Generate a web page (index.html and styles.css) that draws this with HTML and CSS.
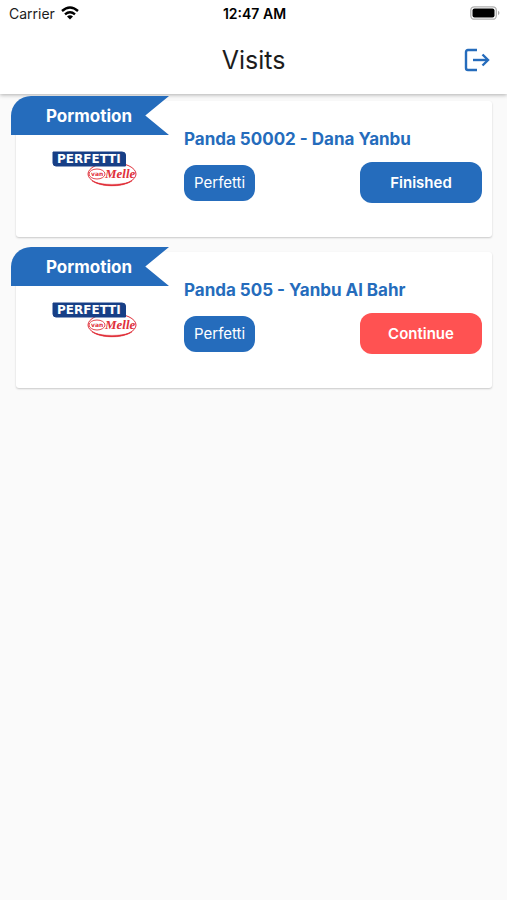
FILE: index.html
```html
<!DOCTYPE html>
<html lang="en">
<head>
  <meta charset="UTF-8">
  <meta name="viewport" content="width=device-width, initial-scale=1.0">
  <title>Visits</title>
  <link rel="stylesheet" href="styles.css">
</head>
<body>

<!-- Shared brand logo -->
<svg class="symbols" aria-hidden="true">
  <symbol id="perfetti" viewBox="0 0 86 37">
    <ellipse cx="60" cy="23" rx="24" ry="11.500" fill="#fff" stroke="#e0303a" stroke-width="1"/>
    <path d="M40 30 C48 36 70 37 80 30 C70 34.500 50 34.500 40 30Z" fill="#e0303a" stroke="#e0303a" stroke-width=".4"/>
    <path d="M1 1 H70 Q73.500 1 73.500 4 V15 H4 Q1 15 1 12Z" fill="#173f86" stroke="#173f86" stroke-linejoin="round"/>
    <ellipse cx="45" cy="23" rx="8" ry="5" fill="#fff" stroke="#e0303a" stroke-width=".9"/>
    <text class="logo-name" x="5" y="12">PERFETTI</text>
    <text class="logo-van" x="39" y="25">van</text>
    <text class="logo-melle" x="53" y="27">Melle</text>
  </symbol>
</svg>

<header class="header">
  <div class="status-bar">
    <div class="carrier">
      <span>Carrier</span>
      <svg width="18" height="14" viewBox="0 0 18 14" fill="none" stroke="#000" stroke-width="2.4">
        <path d="M1 5 Q9 -2 17 5"/>
        <path d="M4 8.300 Q9 4 14 8.300"/>
        <path d="M9 13.500 L6 10.500 Q9 8 12 10.500Z" fill="#000" stroke="none"/>
      </svg>
    </div>
    <div class="time">12:47 AM</div>
    <div class="battery">
      <svg width="30" height="14" viewBox="0 0 30 14">
        <rect x=".8" y=".8" width="25.500" height="12.400" rx="3.500" fill="#fff" stroke="#b0b0b0" stroke-width="1.300"/>
        <rect x="2.500" y="2.500" width="22" height="9" rx="2" fill="#000"/>
        <path d="M28 4.800 Q31 7 28 9.200Z" fill="#aaa"/>
      </svg>
    </div>
  </div>
  <div class="app-bar">
    <h1>Visits</h1>
    <button type="button" class="logout" aria-label="Log out">
      <svg width="26" height="24" viewBox="0 0 26 24" fill="none" stroke="#256cbc" stroke-width="2.400">
        <path d="M13 2 H4 Q2 2 2 4 V20 Q2 22 4 22 H13"/>
        <path d="M9 12 H24"/>
        <path d="M18.500 6.500 L24 12 L18.500 17.500"/>
      </svg>
    </button>
  </div>
</header>

<main class="visits">
  <article class="card">
    <div class="ribbon">Pormotion</div>
    <div class="brand">
      <svg class="logo" role="img" aria-label="Perfetti van Melle"><use href="#perfetti"/></svg>
    </div>
    <div class="details">
      <h2>Panda 50002 - Dana Yanbu</h2>
      <div class="actions">
        <span class="chip">Perfetti</span>
        <button type="button" class="btn finished">Finished</button>
      </div>
    </div>
  </article>

  <article class="card">
    <div class="ribbon">Pormotion</div>
    <div class="brand">
      <svg class="logo" role="img" aria-label="Perfetti van Melle"><use href="#perfetti"/></svg>
    </div>
    <div class="details">
      <h2>Panda 505 - Yanbu Al Bahr</h2>
      <div class="actions">
        <span class="chip">Perfetti</span>
        <button type="button" class="btn continue">Continue</button>
      </div>
    </div>
  </article>
</main>

</body>
</html>
```
FILE: styles.css
```css
body {
  margin: 0;
  background-color: #fafafa;
  font-family: Inter, "Liberation Sans", sans-serif;
  color: #1c1c1c;
}
.symbols {
  display: none;
}
.header {
  background-color: #fff;
  box-shadow: 0 1px 4px rgba(0, 0, 0, 0.3);
}
.status-bar {
  display: grid;
  grid-template-columns: 1fr auto 1fr;
  align-items: center;
  height: 26px;
  padding: 0 7px 0 9px;
  font-size: 14px;
}
.carrier {
  display: flex;
  align-items: center;
  gap: 6px;
}
.time {
  font-weight: 600;
  color: #000;
}
.battery {
  display: flex;
  justify-content: flex-end;
}
.app-bar {
  display: grid;
  grid-template-columns: 1fr auto 1fr;
  align-items: center;
  height: 68px;
  padding: 0 17px;
}
.app-bar h1 {
  grid-column: 2;
  margin: 0;
  font-size: 25px;
  font-weight: 400;
}
.logout {
  justify-self: end;
  display: flex;
  padding: 0;
  border: none;
  background: none;
  cursor: pointer;
}
.visits {
  display: flex;
  flex-direction: column;
  gap: 15px;
  padding: 7px 15px 7px 16px;
}
.card {
  position: relative;
  display: grid;
  grid-template-columns: 158px 1fr;
  min-height: 136px;
  background-color: #fff;
  border-radius: 3px;
  box-shadow: 0 1px 2px rgba(0, 0, 0, 0.2);
}
/* Ribbon hangs over the top left corner of the card */
.ribbon {
  position: absolute;
  top: -5px;
  left: -5px;
  width: 158px;
  box-sizing: border-box;
  padding: 1px 0 0 35px;
  border-top-left-radius: 20px;
  background-color: #256cbc;
  clip-path: polygon(0 0, 100% 0, 85% 50%, 100% 100%, 0 100%);
  color: #fff;
  font-size: 17px;
  font-weight: 700;
  line-height: 38px;
}
.brand {
  display: flex;
  justify-content: center;
  padding-top: 50px;
}
.logo {
  width: 86px;
  height: 37px;
}
.logo-name {
  font-family: "DejaVu Sans", sans-serif;
  font-size: 12px;
  font-weight: bold;
  fill: #fff;
}
.logo-van {
  font-family: "DejaVu Sans", sans-serif;
  font-size: 6px;
  font-weight: bold;
  fill: #e0303a;
}
.logo-melle {
  font-family: "Liberation Serif", serif;
  font-size: 13px;
  font-style: italic;
  font-weight: bold;
  fill: #e0303a;
}
.details {
  padding: 27px 10px 0;
}
.details h2 {
  margin: 0 0 12px;
  font-size: 17px;
  font-weight: 700;
  line-height: 22px;
  color: #256cbc;
}
.actions {
  display: flex;
  align-items: center;
  justify-content: space-between;
}
.chip {
  padding: 0 10px;
  border-radius: 12px;
  background-color: #256cbc;
  color: #fff;
  font-size: 15px;
  line-height: 36px;
}
.btn {
  width: 122px;
  height: 41px;
  padding: 0;
  border: none;
  border-radius: 12px;
  color: #fff;
  font-family: inherit;
  font-size: 15px;
  font-weight: 600;
  cursor: pointer;
}
.finished {
  background-color: #256cbc;
}
.continue {
  background-color: #ff5252;
}
```
